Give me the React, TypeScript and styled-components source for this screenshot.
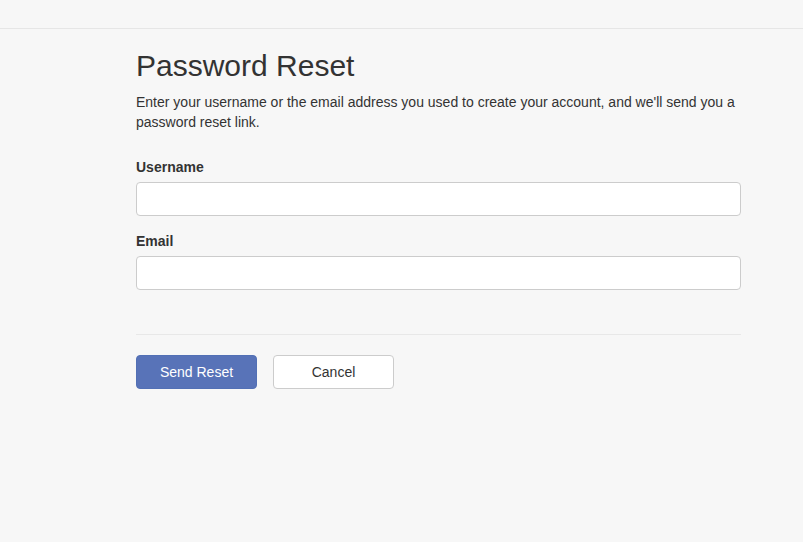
import React from "react";
import styled, {createGlobalStyle} from "styled-components";

const GlobalStyle = createGlobalStyle`
  html, body {
    margin: 0;
    padding: 0;
    background: #f7f7f7;
  }
  body {
    font-family: "Liberation Sans", Arial, sans-serif;
    font-size: 14px;
    line-height: 20px;
    color: #333;
  }
  * {
    box-sizing: border-box;
  }
`

function App() {
    return (
        <Page>
            <GlobalStyle/>
            <TopBar/>
            <Content>
                <Title>Password Reset</Title>
                <Intro>
                    Enter your username or the email address you used to create your account, and we'll send you a
                    password reset link.
                </Intro>
                <Form onSubmit={e => e.preventDefault()}>
                    <Field>
                        <Label htmlFor="username">Username</Label>
                        <Input id="username" type="text"/>
                    </Field>
                    <Field>
                        <Label htmlFor="email">Email</Label>
                        <Input id="email" type="email"/>
                    </Field>
                    <Divider/>
                    <Actions>
                        <Button $primary type="submit">Send Reset</Button>
                        <Button type="button">Cancel</Button>
                    </Actions>
                </Form>
            </Content>
        </Page>
    );
}

const Page = styled.div`
  min-height: 542px;
  background: #f7f7f7;
`

const TopBar = styled.div`
  height: 29px;
  border-bottom: 1px solid #e6e6e6;
`

const Content = styled.div`
  width: 605px;
  margin-left: 136px;
`

const Title = styled.h1`
  margin: 20px 0 10px;
  font-size: 30px;
  line-height: 33px;
  font-weight: 400;
  color: #333;
`

const Intro = styled.p`
  margin: 0;
`

const Form = styled.form`
  margin-top: 25px;
  display: flex;
  flex-direction: column;
`

const Field = styled.div`
  display: flex;
  flex-direction: column;
  margin-bottom: 15px;
`

const Label = styled.label`
  font-weight: 700;
  margin-bottom: 5px;
`

const Input = styled.input`
  height: 34px;
  width: 100%;
  background: #fff;
  border: 1px solid #ccc;
  border-radius: 4px;
  padding: 6px 12px;
  font: inherit;
  color: #555;
  outline: none;
`

const Divider = styled.hr`
  margin: 29px 0 20px;
  border: 0;
  border-top: 1px solid #e8e8e8;
`

const Actions = styled.div`
  display: flex;
  gap: 16px;
`

const Button = styled.button<{ $primary?: boolean }>`
  width: 121px;
  height: 34px;
  border-radius: 4px;
  font-family: "Liberation Sans", Arial, sans-serif;
  font-size: 14px;
  cursor: pointer;
  background: ${p => p.$primary ? "#5873b8" : "#fff"};
  color: ${p => p.$primary ? "#fff" : "#333"};
  border: 1px solid ${p => p.$primary ? "#5270b5" : "#ccc"};
`

export default App;
